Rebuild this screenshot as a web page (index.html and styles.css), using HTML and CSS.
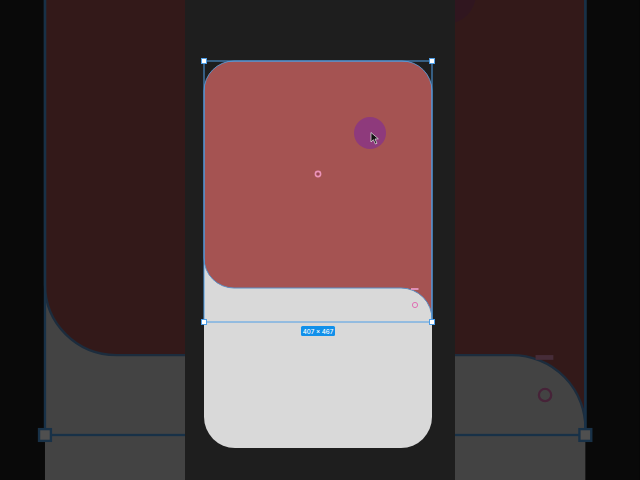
FILE: index.html
```html
<!DOCTYPE html>
<html>
<head>
<meta charset="utf-8">
<link rel="stylesheet" href="styles.css">
</head>
<body>
<svg class="defs" width="0" height="0" aria-hidden="true">
  <defs>
    <g id="scene">
      <rect x="185" y="0" width="270" height="480" fill="#1e1e1e"/>
      <rect x="204" y="61" width="228" height="387" rx="31" fill="#d9d9d9"/>
      <path d="M204,91 A30,30 0 0 1 234,61 L402,61 A30,30 0 0 1 432,91 L432,320 A31,31 0 0 0 401,288 L234,288 A30,30 0 0 1 204,258 Z" fill="#a55352" stroke="#5b8fc4" stroke-width="1"/>
    </g>
    <g id="overlay">
      <rect x="204" y="61" width="228" height="261" fill="none" stroke="#4f9ee6" stroke-width="1"/>
      <rect x="201.5" y="58.5" width="5" height="5" fill="#fff" stroke="#4f9ee6" stroke-width="1"/>
      <rect x="429.5" y="58.5" width="5" height="5" fill="#fff" stroke="#4f9ee6" stroke-width="1"/>
      <rect x="201.5" y="319.5" width="5" height="5" fill="#fff" stroke="#4f9ee6" stroke-width="1"/>
      <rect x="429.5" y="319.5" width="5" height="5" fill="#fff" stroke="#4f9ee6" stroke-width="1"/>
      <rect x="411" y="288" width="7.5" height="2" fill="#e08fb5"/>
      <circle cx="415" cy="305" r="2.6" fill="none" stroke="#e070b4" stroke-width="1"/>
    </g>
  </defs>
</svg>
<div class="stage">
  <svg class="backdrop" viewBox="0 0 640 480" width="640" height="480">
    <g transform="matrix(2.37,0,0,2.35,-438.5,-321.7)">
      <use href="#scene"/>
      <use href="#overlay"/>
    </g>
    <circle cx="446" cy="-6" r="30" fill="#8e3a7c" opacity="0.45"/>
    <rect x="0" y="0" width="640" height="480" fill="#000" opacity="0.69"/>
  </svg>
  <div class="panel">
    <svg class="canvas" viewBox="185 0 270 480" width="270" height="480">
      <use href="#scene"/>
      <circle cx="370" cy="133" r="16" fill="#8e3a7c"/>
      <use href="#overlay"/>
      <circle cx="318" cy="174" r="2.6" fill="#9a4650" stroke="#eb93b8" stroke-width="1.6"/>
      <path d="M371,132.5 L371,142 L373.4,139.7 L375.4,144 L377,143.3 L375,139 L378.3,138.8 Z" fill="#111" stroke="#eee" stroke-width="0.7"/>
      <rect x="301" y="326" width="34" height="10" rx="1.5" fill="#1190ea"/>
      <text x="318" y="333.6" class="dim">407 × 467</text>
    </svg>
  </div>
</div>
</body>
</html>
```

FILE: styles.css
```css
html, body {
  margin: 0;
  padding: 0;
  background: #0a0a0a;
  overflow: hidden;
}
.defs {
  position: absolute;
  width: 0;
  height: 0;
}
.stage {
  position: relative;
  width: 640px;
  height: 480px;
  display: flex;
  justify-content: center;
  overflow: hidden;
}
.backdrop {
  position: absolute;
  left: 0;
  top: 0;
  filter: blur(0.6px);
}
.panel {
  position: relative;
  width: 270px;
  height: 480px;
  background: #1e1e1e;
}
.canvas {
  display: block;
}
.dim {
  font-family: "Inter", "Liberation Sans", sans-serif;
  font-size: 6.2px;
  font-weight: 500;
  fill: #ffffff;
  text-anchor: middle;
}
```
